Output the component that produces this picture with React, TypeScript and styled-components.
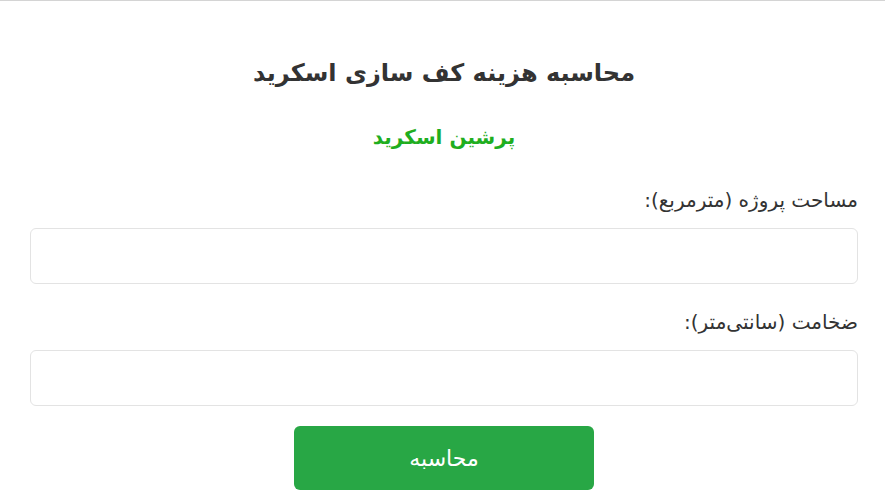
import styled, { createGlobalStyle } from "styled-components";

const GlobalStyle = createGlobalStyle`
  html, body {
    margin: 0;
    padding: 0;
    background: #fff;
  }
  body {
    font-family: "DejaVu Sans", "Noto Sans", sans-serif;
    direction: rtl;
  }
`;

const App = () => {
  return (
    <>
      <GlobalStyle />
      <Container>
        <Title>محاسبه هزینه کف سازی اسکرید</Title>
        <Brand>پرشین اسکرید</Brand>
        <Form>
          <Group>
            <Label>مساحت پروژه (مترمربع):</Label>
            <Input type="number" />
          </Group>
          <Group>
            <Label>ضخامت (سانتی‌متر):</Label>
            <Input type="number" />
          </Group>
          <Button type="button">محاسبه</Button>
        </Form>
      </Container>
    </>
  );
};

export default App;

const Container = styled.div`
  border-top: 1px solid #d4d4d4;
  padding: 0 27px 0 30px;
`;

const Title = styled.h1`
  margin: 0;
  padding-top: 55px;
  text-align: center;
  font-size: 24px;
  line-height: 34px;
  font-weight: bold;
  color: #333;
`;

const Brand = styled.div`
  margin-top: 34px;
  text-align: center;
  font-size: 20px;
  line-height: 26px;
  font-weight: bold;
  color: #1fae1f;
`;

const Form = styled.div`
  display: flex;
  flex-direction: column;
  margin-top: 35px;
`;

const Group = styled.div`
  display: flex;
  flex-direction: column;
  margin-bottom: 23px;

  &:last-of-type {
    margin-bottom: 20px;
  }
`;

const Label = styled.label`
  font-size: 20px;
  line-height: 30px;
  color: #333;
  margin-bottom: 13px;
`;

const Input = styled.input`
  box-sizing: border-box;
  height: 56px;
  width: 100%;
  border: 1px solid #e3e3e3;
  border-radius: 6px;
  padding: 0 12px;
  font-size: 18px;
  font-family: inherit;
  outline: none;
`;

const Button = styled.button`
  align-self: center;
  width: 300px;
  height: 64px;
  border: none;
  border-radius: 6px;
  background: #28a745;
  color: #fff;
  font-family: inherit;
  font-size: 22px;
  cursor: pointer;
`;
